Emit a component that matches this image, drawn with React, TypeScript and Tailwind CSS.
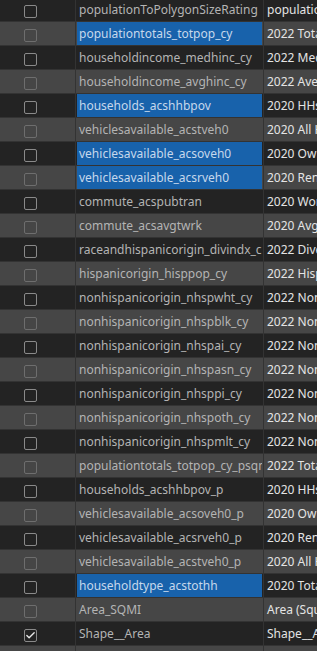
import { Check } from 'lucide-react';

type Field = { name: string; alias: string; selected?: boolean; checked?: boolean };

const fields: Field[] = [
  { name: 'populationToPolygonSizeRating', alias: 'populationToPolygonSizeRating' },
  { name: 'populationtotals_totpop_cy', alias: '2022 Total Population', selected: true },
  { name: 'householdincome_medhinc_cy', alias: '2022 Median Household Income' },
  { name: 'householdincome_avghinc_cy', alias: '2022 Average Household Income' },
  { name: 'households_acshhbpov', alias: '2020 HHs Below Poverty Level', selected: true },
  { name: 'vehiclesavailable_acstveh0', alias: '2020 All Households' },
  { name: 'vehiclesavailable_acsoveh0', alias: '2020 Owner Households', selected: true },
  { name: 'vehiclesavailable_acsrveh0', alias: '2020 Renter Households', selected: true },
  { name: 'commute_acspubtran', alias: '2020 Workers' },
  { name: 'commute_acsavgtwrk', alias: '2020 Avg Travel Time' },
  { name: 'raceandhispanicorigin_divindx_c', alias: '2022 Diversity Index' },
  { name: 'hispanicorigin_hisppop_cy', alias: '2022 Hispanic Population' },
  { name: 'nonhispanicorigin_nhspwht_cy', alias: '2022 Non-Hispanic White' },
  { name: 'nonhispanicorigin_nhspblk_cy', alias: '2022 Non-Hispanic Black' },
  { name: 'nonhispanicorigin_nhspai_cy', alias: '2022 Non-Hispanic AI' },
  { name: 'nonhispanicorigin_nhspasn_cy', alias: '2022 Non-Hispanic Asian' },
  { name: 'nonhispanicorigin_nhsppi_cy', alias: '2022 Non-Hispanic PI' },
  { name: 'nonhispanicorigin_nhspoth_cy', alias: '2022 Non-Hispanic Other' },
  { name: 'nonhispanicorigin_nhspmlt_cy', alias: '2022 Non-Hispanic Multiple' },
  { name: 'populationtotals_totpop_cy_psqmi', alias: '2022 Total Population per Sq Mi' },
  { name: 'households_acshhbpov_p', alias: '2020 HHs Below Poverty Level %' },
  { name: 'vehiclesavailable_acsoveh0_p', alias: '2020 Owner Households %' },
  { name: 'vehiclesavailable_acsrveh0_p', alias: '2020 Renter Households %' },
  { name: 'vehiclesavailable_acstveh0_p', alias: '2020 All Households %' },
  { name: 'householdtype_acstothh', alias: '2020 Total Households', selected: true },
  { name: 'Area_SQMI', alias: 'Area (Square Miles)' },
  { name: 'Shape__Area', alias: 'Shape__Area', checked: true },
  { name: '', alias: '' },
];

const App = () => {
  return (
    <div className="w-[317px] h-[651px] overflow-hidden bg-[#232323] font-['Noto_Sans',sans-serif] text-[12px]">
      <div className="-mt-[2px]">
        {fields.map((f, i) => {
          const light = i % 2 === 1;
          return (
            <div
              key={i}
              className={`flex h-[24px] border-b border-[#333333] ${light ? 'bg-[#464646]' : 'bg-[#232323]'}`}
            >
              <div className="w-[75px] shrink-0 flex items-center pl-[24px] pt-[3px]">
                <div
                  className={`w-[13px] h-[13px] rounded-[2px] border flex items-center justify-center ${
                    light ? 'border-[#6e6e6e]' : 'border-[#8a8a8a]'
                  }`}
                >
                  {f.checked && <Check size={11} strokeWidth={3} className="text-[#e8e8e8]" />}
                </div>
              </div>
              <div className="w-px shrink-0 bg-[#333333]" />
              <div className="w-[187px] shrink-0 px-px">
                <div
                  className={`h-full flex items-center pl-[2px] overflow-hidden whitespace-nowrap pt-[1px] ${
                    f.selected ? 'bg-[#1862ab] text-[#c6d8ec]' : 'text-[#b4b4b4]'
                  }`}
                >
                  {f.name}
                </div>
              </div>
              <div className="w-px shrink-0 bg-[#333333]" />
              <div className="flex-1 flex items-center pl-[3px] overflow-hidden whitespace-nowrap text-[#e4e4e4] pt-[1px]">
                {f.alias}
              </div>
            </div>
          );
        })}
      </div>
    </div>
  );
};

export default App;
